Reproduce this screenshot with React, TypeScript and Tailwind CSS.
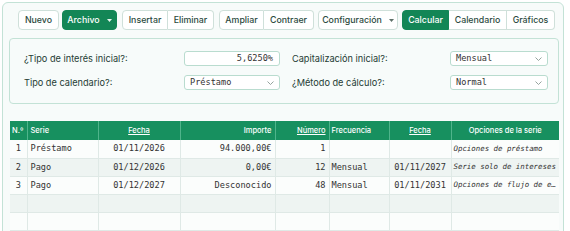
import React from "react";

const sans = { fontFamily: "Inter, 'Noto Sans', sans-serif" };
const mono = { fontFamily: "'DejaVu Sans Mono', 'Liberation Mono', monospace" };

function Tri({ white }: { white?: boolean }) {
  return (
    <svg width="5" height="3" viewBox="0 0 5 3" className="ml-[7px] shrink-0">
      <path d="M0 0h5L2.5 3z" fill={white ? "#e6f5ee" : "#5d6f68"} />
    </svg>
  );
}

function Btn({ children, green, caret, cls = "" }: { children: React.ReactNode; green?: boolean; caret?: boolean; cls?: string }) {
  return (
    <div
      className={
        "h-[20px] flex items-center justify-center text-[8.8px] font-medium whitespace-nowrap " +
        (green ? "bg-[#138656] text-white border border-[#138656] " : "bg-white text-[#2b4a40] border border-[#cfe0da] ") +
        cls
      }
    >
      {children}
      {caret && <Tri white={green} />}
    </div>
  );
}

function Caret() {
  return (
    <svg width="7" height="4" viewBox="0 0 7 4" className="shrink-0">
      <path d="M0.5 0.5l3 3 3-3" fill="none" stroke="#8a9a94" strokeWidth="0.9" />
    </svg>
  );
}

const rows = [
  ["1", "Préstamo", "01/11/2026", "94.000,00€", "1", "", "", "Opciones de préstamo"],
  ["2", "Pago", "01/12/2026", "0,00€", "12", "Mensual", "01/11/2027", "Serie solo de intereses"],
  ["3", "Pago", "01/12/2027", "Desconocido", "48", "Mensual", "01/11/2031", "Opciones de flujo de e…"],
  ["", "", "", "", "", "", "", ""],
  ["", "", "", "", "", "", "", ""],
];

function Field({ children, w, right }: { children: React.ReactNode; w: string; right?: boolean }) {
  return (
    <div
      className={
        w +
        " h-[15px] border border-[#b9dccf] rounded-[3px] bg-white flex items-center text-[8.6px] text-[#333] " +
        (right ? "justify-end pr-[6px]" : "justify-between pl-[5px] pr-[5px]")
      }
      style={mono}
    >
      {children}
    </div>
  );
}

export default function App() {
  return (
    <div className="w-[570px] h-[231px] bg-white overflow-hidden" style={sans}>
      <div className="ml-[2px] mr-[6px] mt-[2px] h-[240px] border border-[#c3e2d6] rounded-t-[6px] bg-[#f7fbfa] pt-[7px] pl-[6px] pr-[3px]">
        {/* toolbar */}
        <div className="flex items-center pl-[9px] h-[20px]">
          <Btn cls="w-[41px] rounded-[4px]">Nuevo</Btn>
          <Btn green caret cls="w-[55px] rounded-[4px] ml-[3px]">Archivo</Btn>
          <div className="flex ml-[5px]">
            <Btn cls="w-[46px] rounded-l-[4px]">Insertar</Btn>
            <Btn cls="w-[46px] rounded-r-[4px] border-l-0">Eliminar</Btn>
          </div>
          <div className="flex ml-[5px]">
            <Btn cls="w-[45px] rounded-l-[4px]">Ampliar</Btn>
            <Btn cls="w-[50px] rounded-r-[4px] border-l-0">Contraer</Btn>
          </div>
          <Btn caret cls="w-[80px] rounded-[4px] ml-[4px]">Configuración</Btn>
          <div className="flex ml-[4px]">
            <Btn green cls="w-[47px] rounded-l-[4px]">Calcular</Btn>
            <Btn cls="w-[58px] border-l-0">Calendario</Btn>
            <Btn cls="w-[48px] rounded-r-[4px] border-l-0">Gráficos</Btn>
          </div>
        </div>

        {/* config panel */}
        <div className="mt-[8px] w-[550px] h-[66px] border border-[#c3e2d6] rounded-[4px] bg-[#f7fbfa] grid grid-cols-2 gap-x-[12px] pl-[14px] pr-[10px] pt-[12px]">
          <div className="flex flex-col gap-[9px]">
            <div className="flex items-center justify-between h-[15px]">
              <span className="text-[9.2px] text-[#253b34]">¿Tipo de interés inicial?:</span>
              <Field w="w-[96px]" right>5,6250%</Field>
            </div>
            <div className="flex items-center justify-between h-[15px]">
              <span className="text-[9.2px] text-[#253b34]">Tipo de calendario?:</span>
              <Field w="w-[96px]">Préstamo<Caret /></Field>
            </div>
          </div>
          <div className="flex flex-col gap-[9px]">
            <div className="flex items-center justify-between h-[15px]">
              <span className="text-[9.2px] text-[#253b34]">Capitalización inicial?:</span>
              <Field w="w-[98px]">Mensual<Caret /></Field>
            </div>
            <div className="flex items-center justify-between h-[15px]">
              <span className="text-[9.2px] text-[#253b34]">¿Método de cálculo?:</span>
              <Field w="w-[98px]">Normal<Caret /></Field>
            </div>
          </div>
        </div>

        {/* table */}
        <table className="mt-[17px] ml-[1px] w-[549px] border-collapse table-fixed">
          <colgroup>
            <col className="w-[17px]" />
            <col className="w-[71px]" />
            <col className="w-[82px]" />
            <col className="w-[95px]" />
            <col className="w-[54px]" />
            <col className="w-[60px]" />
            <col className="w-[62px]" />
            <col className="w-[108px]" />
          </colgroup>
          <thead>
            <tr className="h-[19px] bg-[#17905f] text-white text-[7.5px]">
              <th className="border-r border-[#4fb48b] text-left pl-[2px] font-medium">N.º</th>
              <th className="border-r border-[#4fb48b] text-left pl-[3px] font-medium">Serie</th>
              <th className="border-r border-[#4fb48b] text-center font-medium underline">Fecha</th>
              <th className="border-r border-[#4fb48b] text-right pr-[3px] font-medium">Importe</th>
              <th className="border-r border-[#4fb48b] text-right pr-[3px] font-medium underline">Número</th>
              <th className="border-r border-[#4fb48b] text-left pl-[2px] font-medium">Frecuencia</th>
              <th className="border-r border-[#4fb48b] text-center font-medium underline">Fecha</th>
              <th className="text-center font-medium">Opciones de la serie</th>
            </tr>
          </thead>
          <tbody style={mono} className="text-[#333] text-[8.6px]">
            {rows.map((r, i) => (
              <tr key={i} className={"h-[18px] border-b border-[#dfe9e6] " + (i % 2 === 1 ? "bg-[#eef4f2]" : "bg-[#fbfdfc]")}>
                <td className="border-r border-[#dfe9e6] text-center">{r[0]}</td>
                <td className="border-r border-[#dfe9e6] pl-[3px]">{r[1]}</td>
                <td className="border-r border-[#dfe9e6] text-center">{r[2]}</td>
                <td className="border-r border-[#dfe9e6] text-right pr-[3px]">{r[3]}</td>
                <td className="border-r border-[#dfe9e6] text-right pr-[3px]">{r[4]}</td>
                <td className="border-r border-[#dfe9e6] pl-[2px]">{r[5]}</td>
                <td className="border-r border-[#dfe9e6] text-center">{r[6]}</td>
                <td className="pl-[2px] italic whitespace-nowrap overflow-hidden text-[7.4px]">{r[7]}</td>
              </tr>
            ))}
          </tbody>
        </table>
      </div>
    </div>
  );
}
